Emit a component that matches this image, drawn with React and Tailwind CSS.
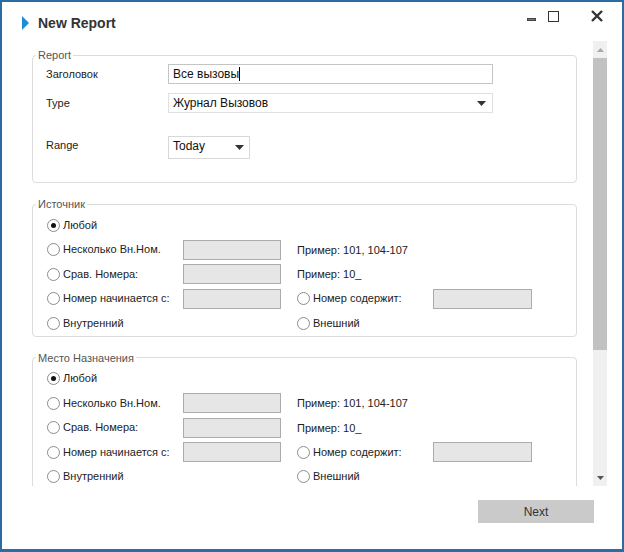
import React from 'react'

const Radio = ({ checked }) => (
  <span className="w-[13px] h-[13px] rounded-full border border-[#8c8c8c] bg-white flex items-center justify-center shrink-0">
    {checked && <span className="w-[5px] h-[5px] rounded-full bg-[#111]" />}
  </span>
)

const Option = ({ label, checked }) => (
  <div className="flex items-center gap-[3px]">
    <Radio checked={checked} />
    <span className="text-[11px] text-[#222] leading-none">{label}</span>
  </div>
)

const Box = ({ wide }) => (
  <div className={`h-[20px] bg-[#e6e6e6] border border-[#acacac] ${wide ? 'w-[99px]' : 'w-[98px]'}`} />
)

const Arrow = ({ color = '#333' }) => (
  <svg width="9" height="5" viewBox="0 0 9 5">
    <polygon points="0,0 9,0 4.5,5" fill={color} />
  </svg>
)

const Group = ({ title, className = '', children }) => (
  <fieldset className={`border border-[#dcdcdc] rounded-[4px] ${className}`}>
    <legend className="ml-[3px] px-[2px] text-[11px] leading-[12px] text-[#555]">{title}</legend>
    {children}
  </fieldset>
)

const NumberFilter = ({ title, className }) => (
  <Group title={title} className={className}>
    <div className="pt-[3px] pl-[14px]">
      <div className="h-[24.5px] flex items-center">
        <Option label="Любой" checked />
      </div>
      <div className="h-[24.5px] grid grid-cols-[136px_114px_auto] items-center">
        <Option label="Несколько Вн.Ном." />
        <Box />
        <span className="text-[11px] text-[#222]">Пример: 101, 104-107</span>
      </div>
      <div className="h-[24.5px] grid grid-cols-[136px_114px_auto] items-center">
        <Option label="Срав. Номера:" />
        <Box />
        <span className="text-[11px] text-[#222]">Пример: 10_</span>
      </div>
      <div className="h-[24.5px] grid grid-cols-[136px_114px_136px_auto] items-center">
        <Option label="Номер начинается с:" />
        <Box />
        <Option label="Номер содержит:" />
        <Box wide />
      </div>
      <div className="h-[24.5px] grid grid-cols-[250px_auto] items-center">
        <Option label="Внутренний" />
        <Option label="Внешний" />
      </div>
    </div>
  </Group>
)

export default function App() {
  return (
    <div className="w-[624px] h-[552px] border-2 border-b-[3px] border-[#2b6ca3] bg-white flex flex-col font-['Liberation_Sans',Arial,sans-serif] text-[#222]">
      {/* Title bar */}
      <div className="h-[39px] shrink-0 flex items-center pl-[20px] pt-[3px]">
        <svg width="8" height="14" viewBox="0 0 8 14" className="mr-[8px]">
          <polygon points="0,0 7,7 0,14" fill="#1a8fd6" />
        </svg>
        <span className="text-[14px] font-bold text-[#333]">New Report</span>
        <div className="ml-auto self-start mt-[5px] flex items-center pr-[19px]">
          <span className="w-[9px] h-[3px] bg-[#777] border border-[#444] mt-[6px]" />
          <span className="ml-[12px] w-[11px] h-[11px] border-[1.5px] border-[#333]" />
          <svg width="12" height="12" viewBox="0 0 12 12" className="ml-[32px]">
            <path d="M1 1 L11 11 M11 1 L1 11" stroke="#333" strokeWidth="2.4" />
          </svg>
        </div>
      </div>

      {/* Scroll area */}
      <div className="h-[445px] shrink-0 flex">
        <div className="flex-1 overflow-hidden pl-[30px] pr-[16px]">
          <Group title="Report" className="mt-[8px]">
            <div className="pt-[3px] pb-[23px] pl-[13px]">
              <div className="flex items-center h-[20px]">
                <span className="w-[122px] text-[11px]">Заголовок</span>
                <div className="w-[325px] h-[20px] border border-[#c4c4c4] flex items-center pl-[4px] text-[12px] text-[#111]">
                  Все вызовы<span className="w-px h-[14px] bg-black" />
                </div>
              </div>
              <div className="flex items-center h-[20px] mt-[9px]">
                <span className="w-[122px] text-[11px]">Type</span>
                <div className="w-[325px] h-[20px] border border-[#e0e0e0] flex items-center pl-[4px] pr-[6px] text-[12px] text-[#111]">
                  <span>Журнал Вызовов</span>
                  <span className="ml-auto flex"><Arrow /></span>
                </div>
              </div>
              <div className="flex items-center h-[23px] mt-[23px]">
                <span className="w-[122px] text-[11px] -mt-[4px]">Range</span>
                <div className="w-[82px] h-[23px] border border-[#d8d8d8] flex items-center pl-[4px] pr-[5px] text-[12px] text-[#111]">
                  <span className="-mt-[4px]">Today</span>
                  <span className="ml-auto flex"><Arrow /></span>
                </div>
              </div>
            </div>
          </Group>

          <NumberFilter title="Источник" className="mt-[15px]" />
          <NumberFilter title="Место Назначения" className="mt-[15px]" />
        </div>

        {/* Scrollbar */}
        <div className="w-[14px] mr-[15px] bg-[#f0f0f0] flex flex-col">
          <div className="h-[17px] flex items-center justify-center">
            <svg width="7" height="4" viewBox="0 0 7 4">
              <polygon points="0,4 7,4 3.5,0" fill="#a8a8a8" />
            </svg>
          </div>
          <div className="h-[292px] bg-[#c1c1c1]" />
          <div className="flex-1" />
          <div className="h-[17px] flex items-center justify-center">
            <svg width="7" height="4" viewBox="0 0 7 4">
              <polygon points="0,0 7,0 3.5,4" fill="#555" />
            </svg>
          </div>
        </div>
      </div>

      {/* Footer */}
      <div className="flex-1 flex justify-end pr-[28px] pt-[14px]">
        <button className="w-[116px] h-[23px] bg-[#cacaca] text-[12px] text-[#333]">Next</button>
      </div>
    </div>
  )
}
